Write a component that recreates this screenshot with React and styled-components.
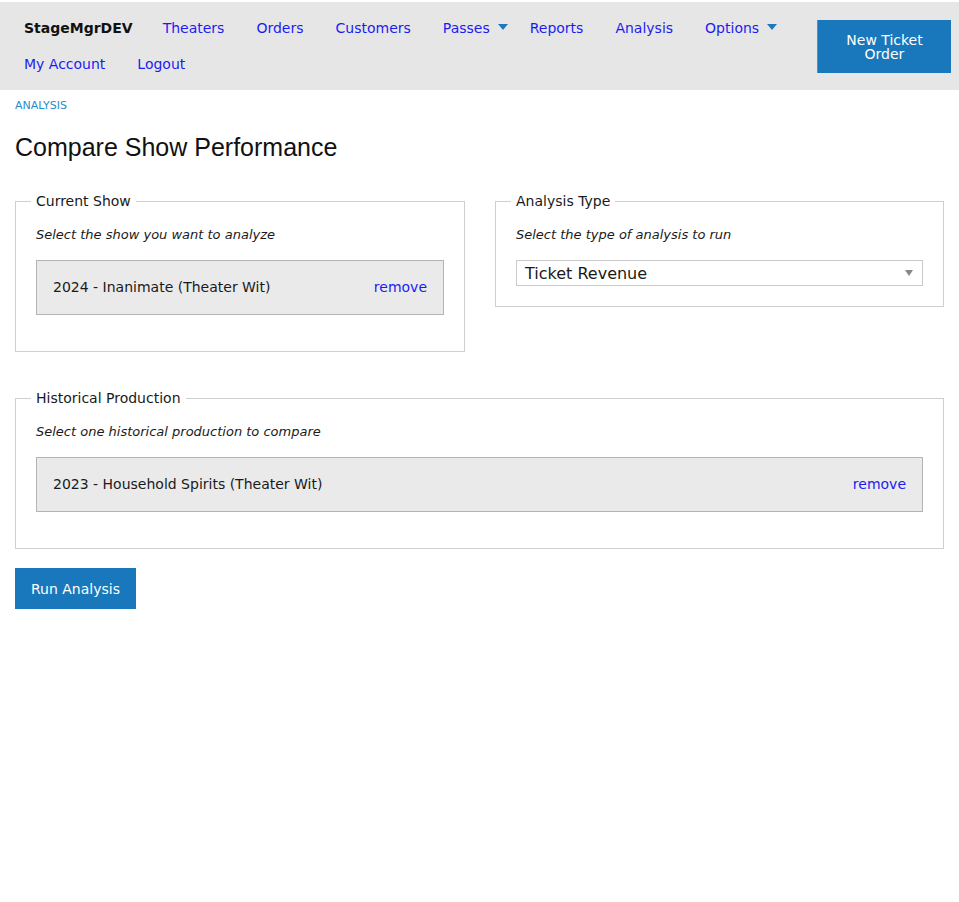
import React from "react"
import styled, { createGlobalStyle } from "styled-components"

const GlobalStyle = createGlobalStyle`
  html, body {
    margin: 0;
    padding: 0;
    background: #fff;
  }
  body {
    font-family: "DejaVu Sans", Verdana, sans-serif;
    color: #1a1a1a;
  }
`

const Page = styled.div`
  padding-top: 2px;
`

const Header = styled.header`
  display: flex;
  align-items: flex-start;
  background: #e6e6e6;
  padding: 8px;
`

const Nav = styled.nav`
  flex: 1;
  display: flex;
  flex-wrap: wrap;
`

const NavItem = styled.a`
  display: flex;
  align-items: center;
  height: 36px;
  padding: 0 ${p => (p.$dropdown ? "6px" : p.$brand ? "14px" : "16px")} 0 16px;
  font-size: 14px;
  color: ${p => (p.$brand ? "#111" : "#1c1cf0")};
  font-weight: ${p => (p.$brand ? "bold" : "normal")};
  text-decoration: none;
  cursor: pointer;
`

const Caret = styled.span`
  display: inline-block;
  width: 0;
  height: 0;
  margin-left: 8px;
  margin-top: -2px;
  border-left: 5.5px solid transparent;
  border-right: 5.5px solid transparent;
  border-top: 6px solid #1a7abd;
`

const PrimaryButton = styled.button`
  background: #1878bb;
  color: #fff;
  border: none;
  font-family: "DejaVu Sans", Verdana, sans-serif;
  font-size: 14px;
  line-height: 14px;
  cursor: pointer;
`

const TicketButton = styled(PrimaryButton)`
  width: 134px;
  height: 53px;
  margin-top: 10px;
  padding: 0 20px;
  border-left: 1px solid #5a8fb8;
`

const Main = styled.main`
  padding: 0 15px;
`

const Breadcrumb = styled.div`
  margin-top: 9px;
  font-size: 11px;
  line-height: 14px;
  color: #2b8bc9;
`

const Title = styled.h1`
  margin: 20px 0 0;
  font-family: "Liberation Sans", Arial, sans-serif;
  font-weight: normal;
  font-size: 25px;
  line-height: 29px;
  color: #111;
`

const Row = styled.div`
  display: grid;
  grid-template-columns: ${p => p.$cols};
  column-gap: 30px;
  align-items: start;
  margin-top: ${p => p.$top}px;
`

const Fieldset = styled.fieldset`
  margin: 0;
  min-width: 0;
  border: 1px solid #cfcfcf;
  padding: 8px 20px 20px;
`

const Legend = styled.legend`
  font-size: 14px;
  line-height: 18px;
  padding: 0 5px;
  margin-left: -5px;
  color: #1a1a1a;
`

const Hint = styled.p`
  margin: 9px 0 17px;
  font-size: 13px;
  line-height: 16px;
  font-style: italic;
  color: #1a1a1a;
`

const Selected = styled.div`
  display: flex;
  justify-content: space-between;
  align-items: center;
  background: #eaeaea;
  border: 1px solid #b4b4b4;
  padding: 18px 16px;
  margin-bottom: 16px;
  font-size: 14px;
  line-height: 17px;
`

const RemoveLink = styled.a`
  color: #1c1cf0;
  text-decoration: none;
  cursor: pointer;
`

const SelectBox = styled.div`
  display: flex;
  justify-content: space-between;
  align-items: center;
  height: 24px;
  border: 1px solid #cacaca;
  background: #fff;
  padding: 0 9px 0 8px;
  font-size: 16px;
`

const SelectArrow = styled.span`
  width: 0;
  height: 0;
  border-left: 4px solid transparent;
  border-right: 4px solid transparent;
  border-top: 6px solid #888;
`

const RunButton = styled(PrimaryButton)`
  margin-top: 19px;
  height: 41px;
  padding: 0 16px;
`

const SelectedShow = ({ label }) => (
  <Selected>
    <span>{label}</span>
    <RemoveLink>remove</RemoveLink>
  </Selected>
)

export default function App() {
  const links = ["Theaters", "Orders", "Customers"]
  return (
    <Page>
      <GlobalStyle />
      <Header>
        <Nav>
          <NavItem $brand>StageMgrDEV</NavItem>
          {links.map(l => (
            <NavItem key={l}>{l}</NavItem>
          ))}
          <NavItem $dropdown>
            Passes<Caret />
          </NavItem>
          <NavItem>Reports</NavItem>
          <NavItem>Analysis</NavItem>
          <NavItem $dropdown>
            Options<Caret />
          </NavItem>
          <NavItem>My Account</NavItem>
          <NavItem>Logout</NavItem>
        </Nav>
        <TicketButton>New Ticket Order</TicketButton>
      </Header>
      <Main>
        <Breadcrumb>ANALYSIS</Breadcrumb>
        <Title>Compare Show Performance</Title>
        <Row $top={30} $cols="450px 449px">
          <Fieldset>
            <Legend>Current Show</Legend>
            <Hint>Select the show you want to analyze</Hint>
            <SelectedShow label="2024 - Inanimate (Theater Wit)" />
          </Fieldset>
          <Fieldset>
            <Legend>Analysis Type</Legend>
            <Hint>Select the type of analysis to run</Hint>
            <SelectBox>
              <span>Ticket Revenue</span>
              <SelectArrow />
            </SelectBox>
          </Fieldset>
        </Row>
        <Row $top={37} $cols="929px">
          <Fieldset>
            <Legend>Historical Production</Legend>
            <Hint>Select one historical production to compare</Hint>
            <SelectedShow label="2023 - Household Spirits (Theater Wit)" />
          </Fieldset>
        </Row>
        <RunButton>Run Analysis</RunButton>
      </Main>
    </Page>
  )
}
